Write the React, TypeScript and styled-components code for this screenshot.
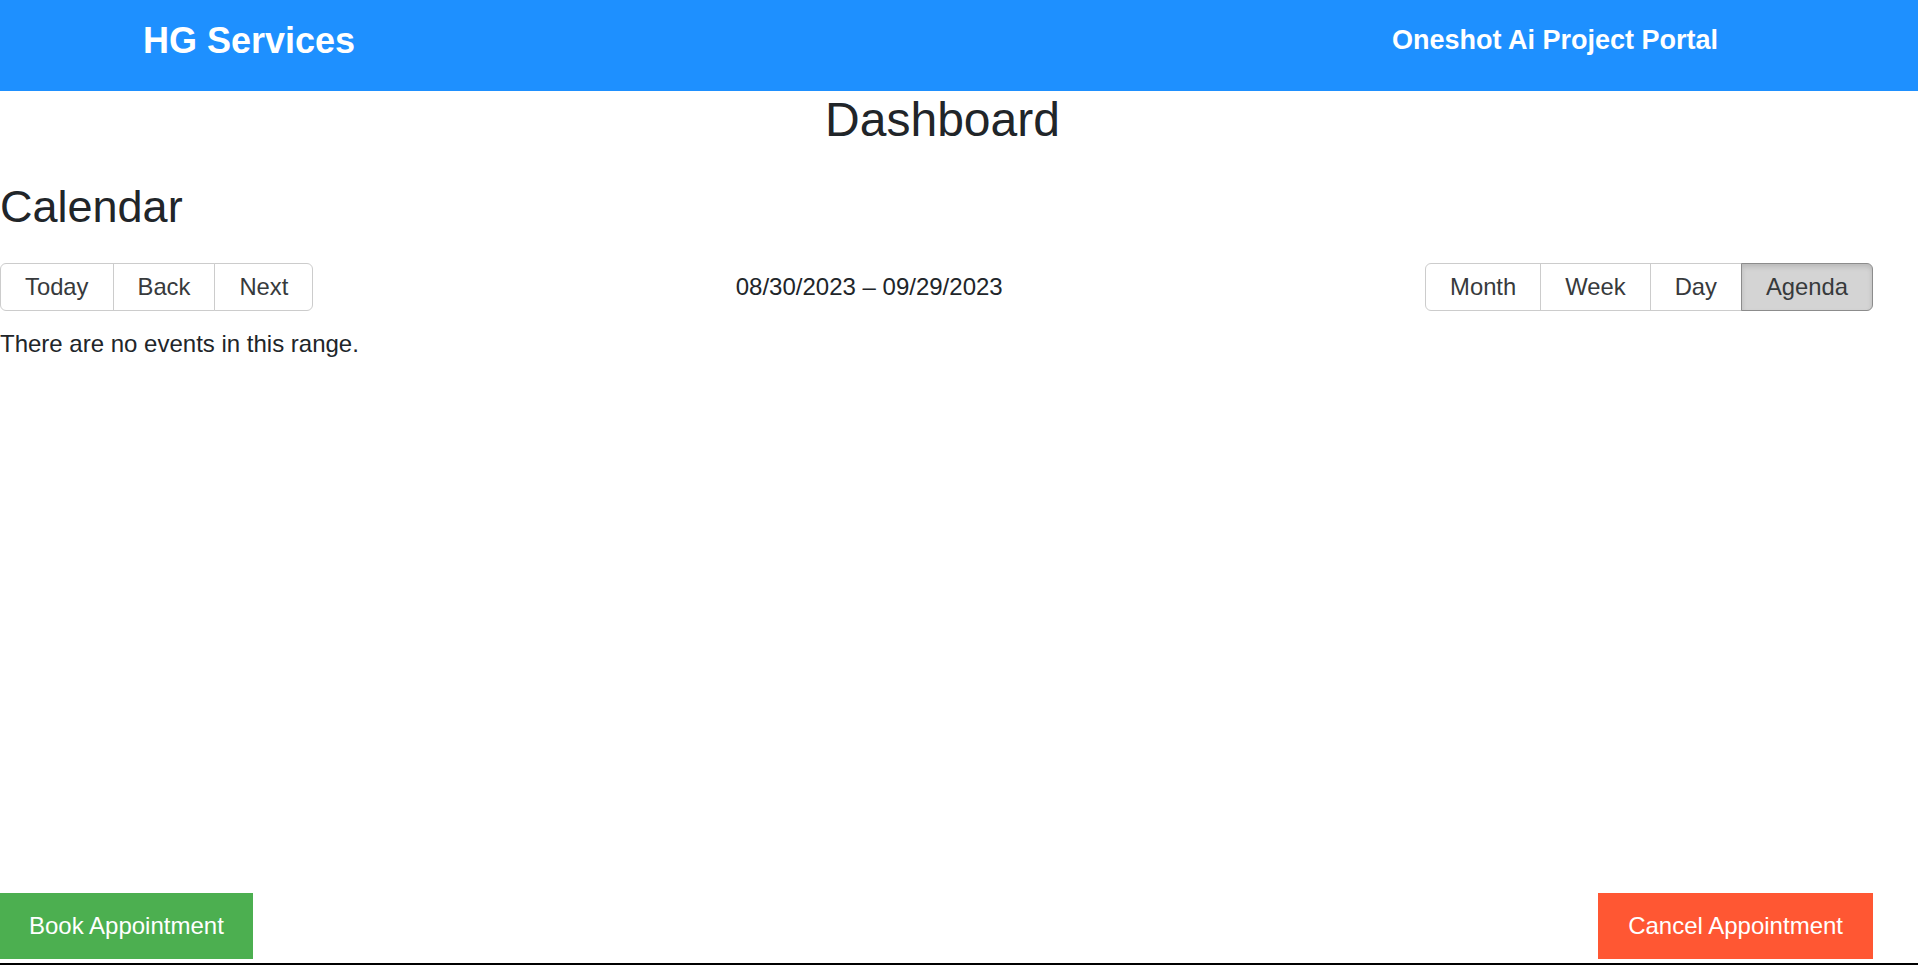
import React from "react";
import styled, { createGlobalStyle, css } from "styled-components";

const GlobalStyle = createGlobalStyle`
  html, body {
    margin: 0;
    padding: 0;
    background: #ffffff;
  }
  body {
    font-family: "Liberation Sans", Arial, sans-serif;
    color: #212529;
    font-size: 24px;
  }
  * { box-sizing: border-box; }
`;

const Page = styled.div`
  display: flex;
  flex-direction: column;
  height: 100vh;
  overflow: hidden;
`;

const Header = styled.header`
  display: flex;
  align-items: center;
  justify-content: space-between;
  height: 91px;
  padding: 0 200px 10px 143px;
  background: #1e90ff;
  color: #ffffff;
`;

const Brand = styled.h1`
  margin: 0;
  font-size: 36px;
  font-weight: 700;
  line-height: normal;
`;

const PortalTitle = styled.h2`
  margin: 0;
  font-size: 27px;
  font-weight: 700;
  line-height: normal;
`;

const Main = styled.main`
  display: flex;
  flex-direction: column;
  padding-right: 45px;
`;

const PageTitle = styled.h1`
  margin: 0;
  padding-left: 12px;
  font-size: 48px;
  font-weight: 400;
  line-height: 58px;
  text-align: center;
  color: #212529;
`;

const SectionTitle = styled.h2`
  margin: 32px 0 0;
  font-size: 45px;
  font-weight: 400;
  line-height: normal;
  color: #212529;
`;

const Toolbar = styled.div`
  display: flex;
  align-items: center;
  margin-top: 30px;
`;

const ButtonGroup = styled.div`
  display: inline-flex;
  white-space: nowrap;
`;

const ToolButton = styled.button<{ $active?: boolean }>`
  font-family: inherit;
  font-size: 23.8px;
  line-height: normal;
  color: #373a3c;
  background: #ffffff;
  border: 1px solid #ccc;
  padding: 9px 24px;
  margin: 0;
  border-radius: 0;
  cursor: pointer;

  & + & {
    margin-left: -1px;
  }
  &:first-child {
    border-top-left-radius: 6px;
    border-bottom-left-radius: 6px;
  }
  &:last-child {
    border-top-right-radius: 6px;
    border-bottom-right-radius: 6px;
  }

  ${(p) =>
    p.$active &&
    css`
      position: relative;
      background: #d4d4d4;
      border-color: #8c8c8c;
      box-shadow: inset 0 3px 5px rgba(0, 0, 0, 0.125);
    `}
`;

const RangeLabel = styled.span`
  flex: 1;
  padding: 0 15px;
  text-align: center;
  font-size: 24px;
  color: #212529;
`;

const EmptyText = styled.p`
  margin: 19px 0 0;
  font-size: 24px;
  line-height: normal;
  color: #212529;
`;

const ActionBar = styled.div`
  display: flex;
  justify-content: space-between;
  margin-top: auto;
  padding: 0 45px 4px 0;
`;

const ActionButton = styled.button<{ $tone: "book" | "cancel" }>`
  height: 66px;
  padding: 0 29px;
  border: none;
  border-radius: 0;
  font-family: inherit;
  font-size: 24px;
  color: #ffffff;
  cursor: pointer;
  background: ${(p) => (p.$tone === "book" ? "#4caf50" : "#ff5733")};
  ${(p) =>
    p.$tone === "cancel" &&
    css`
      padding: 0 30px;
    `}
`;

const BottomRule = styled.div`
  height: 2px;
  background: #000000;
  flex-shrink: 0;
`;

export default function App() {
  const views = ["Month", "Week", "Day", "Agenda"];
  return (
    <>
      <GlobalStyle />
      <Page>
        <Header>
          <Brand>HG Services</Brand>
          <PortalTitle>Oneshot Ai Project Portal</PortalTitle>
        </Header>
        <Main>
          <PageTitle>Dashboard</PageTitle>
          <SectionTitle>Calendar</SectionTitle>
          <Toolbar>
            <ButtonGroup>
              <ToolButton>Today</ToolButton>
              <ToolButton>Back</ToolButton>
              <ToolButton>Next</ToolButton>
            </ButtonGroup>
            <RangeLabel>08/30/2023 – 09/29/2023</RangeLabel>
            <ButtonGroup>
              {views.map((v) => (
                <ToolButton key={v} $active={v === "Agenda"}>
                  {v}
                </ToolButton>
              ))}
            </ButtonGroup>
          </Toolbar>
          <EmptyText>There are no events in this range.</EmptyText>
        </Main>
        <ActionBar>
          <ActionButton $tone="book">Book Appointment</ActionButton>
          <ActionButton $tone="cancel">Cancel Appointment</ActionButton>
        </ActionBar>
        <BottomRule />
      </Page>
    </>
  );
}
